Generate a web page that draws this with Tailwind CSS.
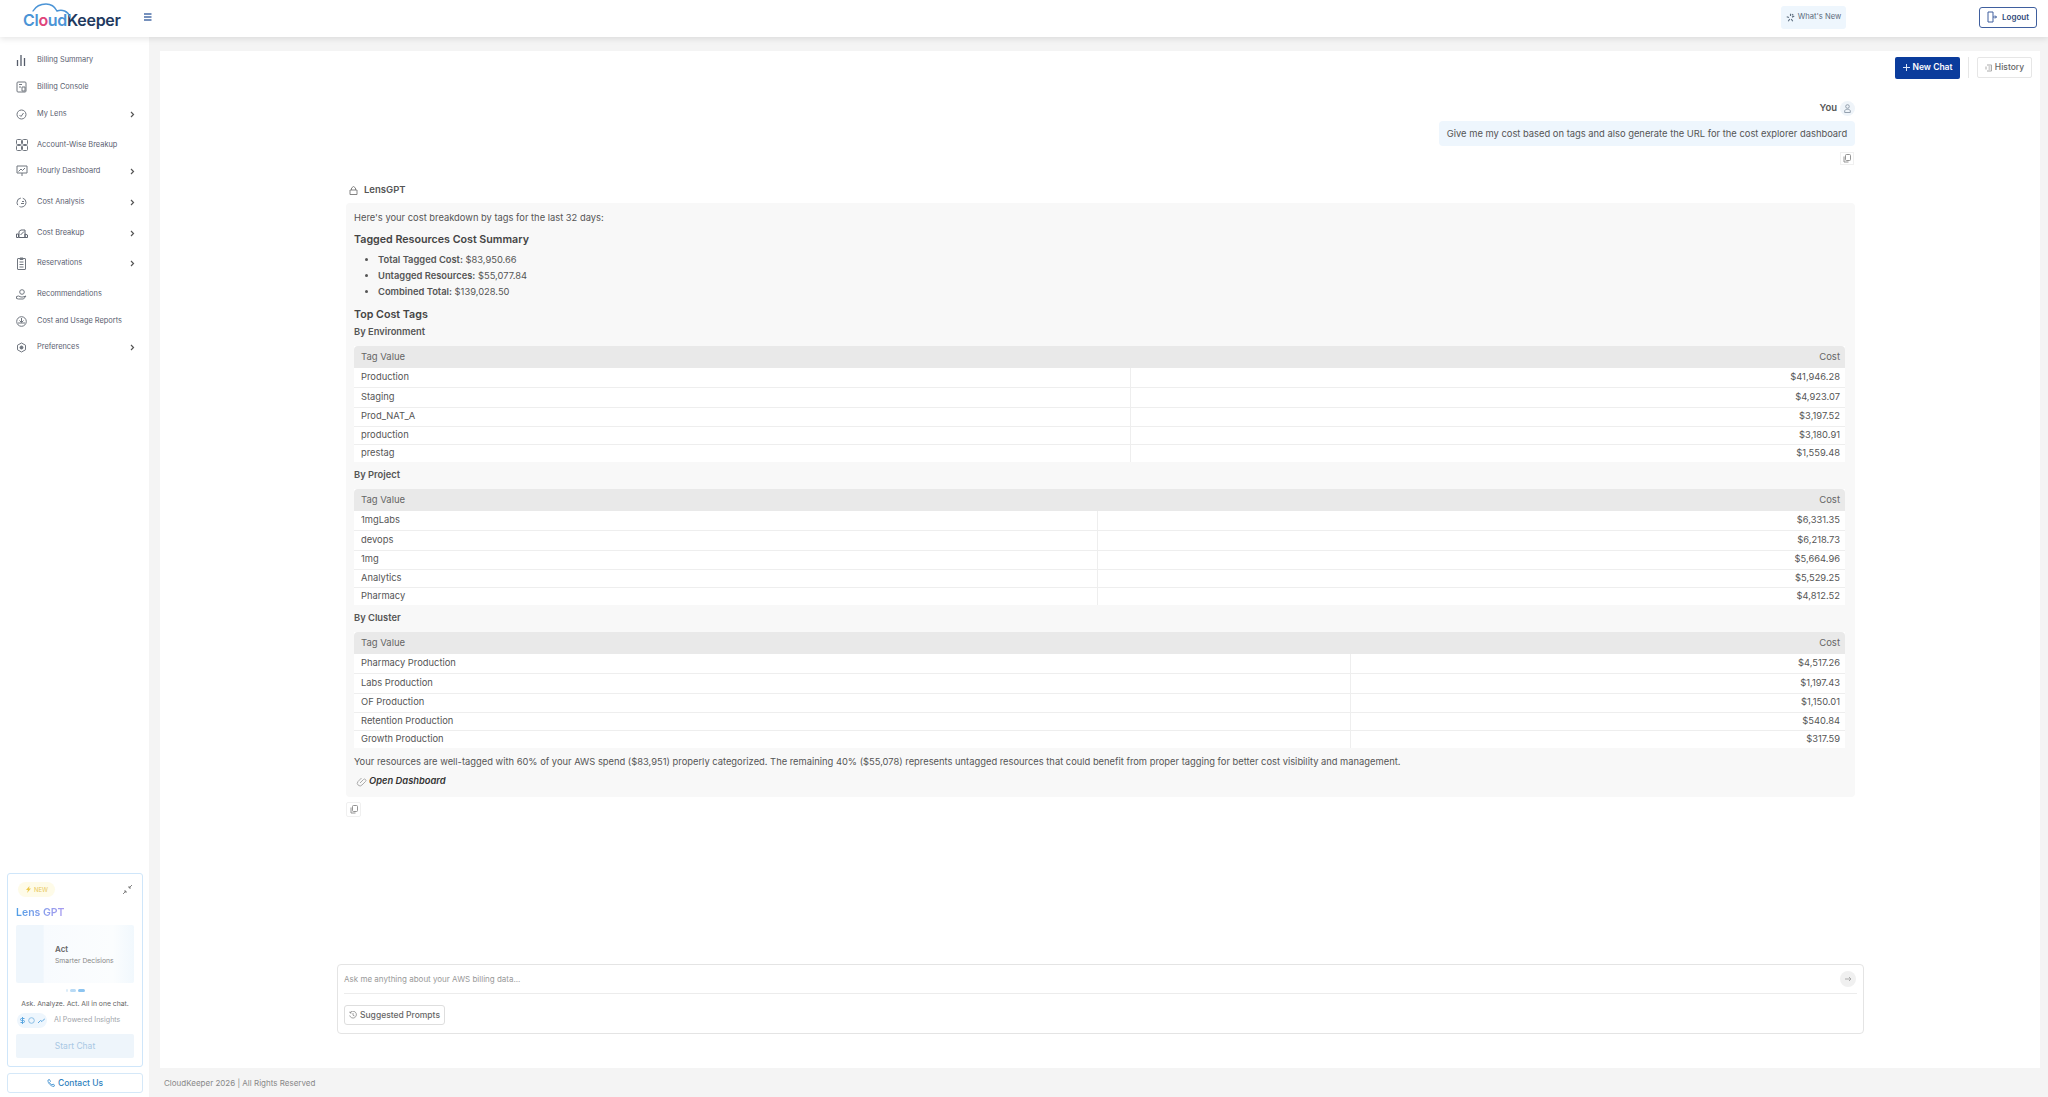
<!doctype html>
<html lang="en">
<head>
<meta charset="UTF-8">
<script src="https://cdn.jsdelivr.net/npm/@tailwindcss/browser@4"></script>
<title>CloudKeeper Lens</title>
</head>
<body class="h-screen overflow-hidden flex flex-col bg-[#f4f4f4] text-[#444] font-[Inter,sans-serif]">

<!-- top bar -->
<header class="h-[37px] shrink-0 bg-white shadow-[0_2px_6px_rgba(0,0,0,0.1)] relative z-10 flex items-center pl-[23px] pr-[11px]">
  <div class="relative w-[97px] h-[37px] flex items-center pt-[3px] text-[16px] leading-none font-semibold tracking-[-0.3px] text-[#1f3a5f]">
    <svg class="absolute left-0 top-[3px]" width="50" height="18" viewBox="0 0 50 18" fill="none" stroke="#4b94d6" stroke-width="1.400" stroke-linecap="round"><path d="M10 8C13 3 18 1 23 1c5 0 9 3 11 7 5-2 11 0 13 6"/></svg>
    <span class="text-[#4b94d6]">Cl</span><span class="text-[#e0457b]">o</span><span class="text-[#4b94d6]">ud</span><span>Keeper</span>
  </div>
  <svg class="ml-[23px] mb-[4px]" width="9" height="8" viewBox="0 0 9 8" fill="none" stroke="#4a6ea8" stroke-width="1.300"><path d="M1 1h7.500M1 4h7.500M1 7h7.500"/></svg>
  <div class="ml-auto flex items-center mb-[3px]">
    <div class="w-[65px] h-[23px] rounded-[3px] bg-[#eef6fd] flex items-center justify-center gap-[3px] text-[7.600px] text-[#5b6b7c]">
      <svg width="9" height="9" viewBox="0 0 12 12" fill="none" stroke="#5b6b7c" stroke-width="1.500"><path d="M6 1v3M11 4 8 5.500M9 11 7 8M3 11l2-3M1 5l3 1M9.500 1.500 8 3"/></svg>
      What's New
    </div>
    <div class="ml-[133px] w-[58px] h-[21px] rounded-[3px] border border-[#3f5f9e] flex items-center justify-center gap-[5px] text-[8px] font-semibold text-[#2f4a7a]">
      <svg width="10" height="12" viewBox="0 0 10 12" fill="none" stroke="#3f5f9e" stroke-width="1"><path d="M6 1H1v10h5zM6 6h3.500M8 4.500 9.500 6 8 7.500"/></svg>
      Logout
    </div>
  </div>
</header>

<div class="flex-1 flex min-h-0">
  <!-- sidebar -->
  <aside class="w-[149px] shrink-0 bg-white flex flex-col pt-[10px] pb-[4px] text-[7.400px] text-[#5a6070]">
    <nav>
      <a class="h-[26px] mb-[1px] flex items-center pl-[16px]">
        <svg class="w-[10px] h-[12px] mr-[11px]" viewBox="0 0 10 12" fill="none" stroke="#555c6a" stroke-width="1.300"><path d="M1.500 12V6M5 12V1M8.500 12V4"/></svg>
        Billing Summary
      </a>
      <a class="h-[26px] mb-[1px] flex items-center pl-[16px]">
        <svg class="w-[11px] h-[12px] mr-[10px]" viewBox="0 0 11 12" fill="none" stroke="#70767f" stroke-width="1"><rect x="1" y="1" width="9" height="10" rx="1"/><path d="M3 3.500h3M3 6h2M6 6h3v4H6z"/></svg>
        Billing Console
      </a>
      <a class="h-[26px] mb-[5px] flex items-center pl-[16px]">
        <svg class="w-[11px] h-[11px] mr-[10px]" viewBox="0 0 11 11" fill="none" stroke="#70767f" stroke-width="1"><circle cx="5.500" cy="5.500" r="4.500"/><path d="M3.500 6 5 7.500 7.500 4"/></svg>
        My Lens
        <svg class="ml-auto mr-[14px] mt-[1px]" width="5" height="7" viewBox="0 0 5 7" fill="none" stroke="#555" stroke-width="1.200"><path d="M1 1l2.500 2.500L1 6"/></svg>
      </a>
      <a class="h-[26px] flex items-center pl-[16px]">
        <svg class="w-[12px] h-[12px] mr-[9px]" viewBox="0 0 12 12" fill="none" stroke="#70767f" stroke-width="1"><rect x="0.500" y="0.500" width="5" height="5" rx="1"/><rect x="6.500" y="0.500" width="5" height="5" rx="1"/><rect x="0.500" y="6.500" width="5" height="5" rx="1"/><rect x="6.500" y="6.500" width="5" height="5" rx="1"/></svg>
        Account-Wise Breakup
      </a>
      <a class="h-[26px] mb-[5px] flex items-center pl-[16px]">
        <svg class="w-[12px] h-[12px] mr-[9px]" viewBox="0 0 12 12" fill="none" stroke="#70767f" stroke-width="1"><path d="M1 1h10v7H1zM6 8v3M2.500 6.500 5 4l1.500 1.500L9 3"/></svg>
        Hourly Dashboard
        <svg class="ml-auto mr-[14px] mt-[1px]" width="5" height="7" viewBox="0 0 5 7" fill="none" stroke="#555" stroke-width="1.200"><path d="M1 1l2.500 2.500L1 6"/></svg>
      </a>
      <a class="h-[26px] mb-[5px] flex items-center pl-[16px]">
        <svg class="w-[11px] h-[11px] mr-[10px]" viewBox="0 0 11 11" fill="none" stroke="#70767f" stroke-width="1"><circle cx="5.500" cy="5.500" r="4.500" stroke-dasharray="9 2"/><path d="M6 4.500h2M5 6.500h3"/></svg>
        Cost Analysis
        <svg class="ml-auto mr-[14px] mt-[1px]" width="5" height="7" viewBox="0 0 5 7" fill="none" stroke="#555" stroke-width="1.200"><path d="M1 1l2.500 2.500L1 6"/></svg>
      </a>
      <a class="h-[26px] mb-[4px] flex items-center pl-[16px]">
        <svg class="w-[12px] h-[9px] mr-[9px]" viewBox="0 0 12 9" fill="none" stroke="#5f6570" stroke-width="1"><path d="M.5 8.500V5h2v3.500zM3 8.500V2.500L5 1h4v7.500zM9 8.500V5l2.500 1v2.500zM4.500 6 8 2.500"/></svg>
        Cost Breakup
        <svg class="ml-auto mr-[14px] mt-[1px]" width="5" height="7" viewBox="0 0 5 7" fill="none" stroke="#555" stroke-width="1.200"><path d="M1 1l2.500 2.500L1 6"/></svg>
      </a>
      <a class="h-[26px] mb-[5px] flex items-center pl-[16px]">
        <svg class="w-[11px] h-[13px] mr-[10px]" viewBox="0 0 11 13" fill="none" stroke="#70767f" stroke-width="1"><rect x="1.500" y="1.500" width="8" height="11" rx="0.500"/><path d="M4 1h3v1.500H4zM3.500 5h4M3.500 7.500h4M3.500 10h4"/></svg>
        Reservations
        <svg class="ml-auto mr-[14px] mt-[1px]" width="5" height="7" viewBox="0 0 5 7" fill="none" stroke="#555" stroke-width="1.200"><path d="M1 1l2.500 2.500L1 6"/></svg>
      </a>
      <a class="h-[26px] mb-[1px] flex items-center pl-[16px]">
        <svg class="w-[11px] h-[11px] mr-[10px]" viewBox="0 0 11 11" fill="none" stroke="#70767f" stroke-width="1"><circle cx="6" cy="3" r="2.300"/><path d="M.5 7.500l2-.5 2.500 1h2l3-1-2.500 3H2.500L.5 9.500z"/></svg>
        Recommendations
      </a>
      <a class="h-[26px] flex items-center pl-[16px]">
        <svg class="w-[11px] h-[11px] mr-[10px]" viewBox="0 0 11 11" fill="none" stroke="#70767f" stroke-width="1"><circle cx="5.500" cy="5.500" r="4.800"/><path d="M5.500 2v4M3.500 4.500l2 2 2-2M2 7h7"/></svg>
        Cost and Usage Reports
      </a>
      <a class="h-[26px] flex items-center pl-[16px]">
        <svg class="w-[11px] h-[11px] mr-[10px]" viewBox="0 0 11 11" fill="none" stroke="#70767f" stroke-width="1"><path d="M5.500 1 9.500 3.200v4.600L5.500 10l-4-2.200V3.200z"/><circle cx="5.500" cy="5.500" r="1.500" fill="#70767f"/></svg>
        Preferences
        <svg class="ml-auto mr-[14px] mt-[1px]" width="5" height="7" viewBox="0 0 5 7" fill="none" stroke="#555" stroke-width="1.200"><path d="M1 1l2.500 2.500L1 6"/></svg>
      </a>
    </nav>

    <div class="mt-auto ml-[7px] mr-[6px] h-[194px] rounded-[3px] border border-[#cfe6fa] pt-[8px] px-[8px] flex flex-col">
      <div class="flex items-center justify-between">
        <span class="w-[37px] h-[15px] ml-[2px] rounded-full bg-[#fefbe8] flex items-center justify-center gap-[2px] text-[6px] text-[#e8c75c]">
          <svg width="7" height="7" viewBox="0 0 7 7" fill="#ecc94b"><path d="M4.500 0 1 4h2l-1 3 4-4.500H4z"/></svg>NEW
        </span>
        <svg class="mr-[1px]" width="11" height="11" viewBox="0 0 11 11" fill="none" stroke="#777" stroke-width="0.900"><path d="M10 1 7 4M7 2v2h2M1 10l3-3M2 7h2v2"/></svg>
      </div>
      <div class="mt-[8px] text-[10.500px] leading-[15px] font-semibold text-transparent bg-clip-text bg-gradient-to-r from-[#4f9fe6] to-[#a99bf0] w-fit">Lens GPT</div>
      <div class="mt-[5px] h-[58px] rounded-[2px] bg-[linear-gradient(90deg,#eff6fc_0,#eff6fc_23%,#f8fbfe_24%,#fbfdfe_82%,#f1f8fd_100%)] pl-[39px] pt-[18px]">
        <div class="text-[8px] leading-[12px] font-semibold text-[#666]">Act</div>
        <div class="text-[6.800px] leading-[10px] mt-[1px] text-[#888]">Smarter Decisions</div>
      </div>
      <div class="mt-[6px] flex justify-center gap-[2px]">
        <span class="w-[2px] h-[3px] rounded-full bg-[#dcecf8]"></span>
        <span class="w-[6px] h-[3px] rounded-full bg-[#b8daf5]"></span>
        <span class="w-[7px] h-[3px] rounded-full bg-[#8cc4f0]"></span>
      </div>
      <div class="mt-[7px] text-center text-[6.800px] leading-[10px] whitespace-nowrap text-[#666]">Ask. Analyze. Act. All in one chat.</div>
      <div class="mt-[4px] flex items-center">
        <span class="w-[30px] h-[15px] ml-[1px] rounded-full bg-[#eef6fd] flex items-center justify-center gap-[3px]">
          <svg width="5" height="7" viewBox="0 0 5 7" fill="none" stroke="#5aa6e0"><path d="M4.500 1.500H1.500a1 1 0 0 0 0 2h2a1 1 0 0 1 0 2H.5M2.500 0v7"/></svg>
          <svg width="7" height="7" viewBox="0 0 7 7" fill="none" stroke="#8bbfe6"><circle cx="3.500" cy="3.500" r="2.800"/></svg>
          <svg width="7" height="7" viewBox="0 0 7 7" fill="none" stroke="#5aa6e0"><path d="M0 6 2.500 3.500l1.500 1L7 1.500"/></svg>
        </span>
        <span class="ml-[7px] text-[7.100px] text-[#a0a4aa]">AI Powered Insights</span>
      </div>
      <div class="mt-[6px] h-[24px] rounded-[2px] bg-[#eef5fb] flex items-center justify-center text-[8.500px] text-[#a9c8e4]">Start Chat</div>
    </div>
    <div class="mt-[6px] ml-[7px] mr-[6px] h-[20px] shrink-0 rounded-[3px] border border-[#d5e8f8] flex items-center justify-center gap-[3px] text-[8.500px] font-medium text-[#2f7fbe]">
      <svg width="8" height="8" viewBox="0 0 8 8" fill="none" stroke="#5a9fd6"><path d="M1 1l1.500-.5L3.500 2.500 2.500 3.500C3 4.800 3.800 5.500 5 6l1-1 1.500 1L7 7.500C4 7.500.5 4 1 1z"/></svg>
      Contact Us
    </div>
  </aside>

  <!-- main area -->
  <div class="flex-1 min-w-0 flex flex-col pl-[11px] pr-[8px] pt-[14px]">
    <main class="flex-1 min-h-0 bg-white relative flex flex-col">
      <div class="h-[27px] mt-[3px] flex items-center justify-end pr-[8px]">
        <div class="w-[65px] h-[22px] rounded-[2px] bg-[#0b3c9c] flex items-center justify-center gap-[3px] text-[8.500px] font-semibold text-white">
          <svg width="7" height="7" viewBox="0 0 7 7" stroke="#dce6f8" stroke-width="1"><path d="M3.500 0v7M0 3.500h7"/></svg>
          New Chat
        </div>
        <div class="mx-[8px] w-px h-[21px] bg-[#e6e6e6]"></div>
        <div class="w-[55px] h-[21px] rounded-[2px] border border-[#e6e6e6] flex items-center justify-center gap-[2px] text-[8.500px] font-medium text-[#666]">
          <svg width="8" height="8" viewBox="0 0 8 8" fill="none" stroke="#aaa"><path d="M2 1h4.500v6H2M1 2.500v3M3.500 3h2M3.500 5h2"/></svg>
          History
        </div>
      </div>

      <!-- user message -->
      <div class="mt-[20px] pr-[185px] flex items-center justify-end gap-[3px] h-[15px] text-[9.500px] font-semibold text-[#555]">
        You
        <span class="w-[15px] h-[15px] rounded-full bg-[#eff4f9] flex items-center justify-center">
          <svg width="7" height="9" viewBox="0 0 7 9" fill="none" stroke="#8a97a6" stroke-width="0.900"><circle cx="3.500" cy="2.500" r="1.800"/><path d="M.7 8.500V7c0-1 1-1.700 2.800-1.700S6.300 6 6.300 7v1.500z"/></svg>
        </span>
      </div>
      <div class="mr-[185px] mt-[5px] pt-[1px] self-end h-[25px] w-[416px] rounded-[4px] bg-[#eef6fd] flex items-center justify-center text-[9.370px] text-[#555] whitespace-nowrap">Give me my cost based on tags and also generate the URL for the cost explorer dashboard</div>
      <div class="mr-[186px] mt-[6px] self-end w-[14px] h-[13px] border border-[#f0f0f0] flex items-center justify-center">
        <svg width="8" height="9" viewBox="0 0 8 9" fill="none" stroke="#888" stroke-width="0.900"><rect x="2.500" y="0.500" width="5" height="6" rx="1"/><path d="M1 2.500v5.500h4.500"/></svg>
      </div>

      <!-- assistant message -->
      <div class="ml-[186px] mr-[185px] mt-[19px]">
        <div class="h-[13px] flex items-center gap-[6px] text-[9.500px] font-semibold text-[#555]">
          <svg class="ml-[3px]" width="9" height="9" viewBox="0 0 9 9" fill="none" stroke="#777" stroke-width="0.900"><path d="M1 4h7v4.500H1zM2.500 4V2l2-1.500L6.500 2v2"/></svg>
          LensGPT
        </div>
        <div class="mt-[6px] h-[594px] rounded-[4px] bg-[#f8f8f8] pl-[8px] pr-[9px] pt-[8px] text-[9.350px] text-[#555]">
          <p class="leading-[14px]">Here's your cost breakdown by tags for the last 32 days:</p>
          <h3 class="mt-[7px] text-[10.700px] leading-[15px] font-semibold text-[#444]">Tagged Resources Cost Summary</h3>
          <ul class="mt-[5px] ml-[24px] list-disc">
            <li class="h-[16px] leading-[16px]"><b class="font-semibold">Total Tagged Cost:</b> $83,950.66</li>
            <li class="h-[16px] leading-[16px]"><b class="font-semibold">Untagged Resources:</b> $55,077.84</li>
            <li class="h-[16px] leading-[16px]"><b class="font-semibold">Combined Total:</b> $139,028.50</li>
          </ul>
          <h3 class="mt-[7px] text-[10.700px] leading-[15px] font-semibold text-[#444]">Top Cost Tags</h3>
          <h4 class="mt-[3px] h-[14px] leading-[14px] font-semibold">By Environment</h4>

          <table class="mt-[7px] w-[1491px] table-fixed border-collapse bg-white">
            <thead>
              <tr class="h-[22px] bg-[#e9e9e9] text-[9.500px] text-[#666]">
                <th class="w-[776px] pl-[7px] font-normal text-left rounded-tl-[4px]">Tag Value</th>
                <th class="pr-[5px] font-normal text-right rounded-tr-[4px]">Cost</th>
              </tr>
            </thead>
            <tbody>
              <tr class="h-[19px] border-b border-[#eee]"><td class="pl-[7px] border-r border-[#eee]">Production</td><td class="pr-[5px] text-right">$41,946.28</td></tr>
              <tr class="h-[20px] border-b border-[#eee]"><td class="pl-[7px] border-r border-[#eee]">Staging</td><td class="pr-[5px] text-right">$4,923.07</td></tr>
              <tr class="h-[19px] border-b border-[#eee]"><td class="pl-[7px] border-r border-[#eee]">Prod_NAT_A</td><td class="pr-[5px] text-right">$3,197.52</td></tr>
              <tr class="h-[18px] border-b border-[#eee]"><td class="pl-[7px] border-r border-[#eee]">production</td><td class="pr-[5px] text-right">$3,180.91</td></tr>
              <tr class="h-[18px]"><td class="pl-[7px] border-r border-[#eee]">prestag</td><td class="pr-[5px] text-right">$1,559.48</td></tr>
            </tbody>
          </table>

          <h4 class="mt-[6px] h-[14px] leading-[14px] font-semibold">By Project</h4>
          <table class="mt-[7px] w-[1491px] table-fixed border-collapse bg-white">
            <thead>
              <tr class="h-[22px] bg-[#e9e9e9] text-[9.500px] text-[#666]">
                <th class="w-[743px] pl-[7px] font-normal text-left rounded-tl-[4px]">Tag Value</th>
                <th class="pr-[5px] font-normal text-right rounded-tr-[4px]">Cost</th>
              </tr>
            </thead>
            <tbody>
              <tr class="h-[19px] border-b border-[#eee]"><td class="pl-[7px] border-r border-[#eee]">1mgLabs</td><td class="pr-[5px] text-right">$6,331.35</td></tr>
              <tr class="h-[20px] border-b border-[#eee]"><td class="pl-[7px] border-r border-[#eee]">devops</td><td class="pr-[5px] text-right">$6,218.73</td></tr>
              <tr class="h-[19px] border-b border-[#eee]"><td class="pl-[7px] border-r border-[#eee]">1mg</td><td class="pr-[5px] text-right">$5,664.96</td></tr>
              <tr class="h-[18px] border-b border-[#eee]"><td class="pl-[7px] border-r border-[#eee]">Analytics</td><td class="pr-[5px] text-right">$5,529.25</td></tr>
              <tr class="h-[18px]"><td class="pl-[7px] border-r border-[#eee]">Pharmacy</td><td class="pr-[5px] text-right">$4,812.52</td></tr>
            </tbody>
          </table>

          <h4 class="mt-[6px] h-[14px] leading-[14px] font-semibold">By Cluster</h4>
          <table class="mt-[7px] w-[1491px] table-fixed border-collapse bg-white">
            <thead>
              <tr class="h-[22px] bg-[#e9e9e9] text-[9.500px] text-[#666]">
                <th class="w-[996px] pl-[7px] font-normal text-left rounded-tl-[4px]">Tag Value</th>
                <th class="pr-[5px] font-normal text-right rounded-tr-[4px]">Cost</th>
              </tr>
            </thead>
            <tbody>
              <tr class="h-[19px] border-b border-[#eee]"><td class="pl-[7px] border-r border-[#eee]">Pharmacy Production</td><td class="pr-[5px] text-right">$4,517.26</td></tr>
              <tr class="h-[20px] border-b border-[#eee]"><td class="pl-[7px] border-r border-[#eee]">Labs Production</td><td class="pr-[5px] text-right">$1,197.43</td></tr>
              <tr class="h-[19px] border-b border-[#eee]"><td class="pl-[7px] border-r border-[#eee]">OF Production</td><td class="pr-[5px] text-right">$1,150.01</td></tr>
              <tr class="h-[18px] border-b border-[#eee]"><td class="pl-[7px] border-r border-[#eee]">Retention Production</td><td class="pr-[5px] text-right">$540.84</td></tr>
              <tr class="h-[18px]"><td class="pl-[7px] border-r border-[#eee]">Growth Production</td><td class="pr-[5px] text-right">$317.59</td></tr>
            </tbody>
          </table>

          <p class="mt-[7px] leading-[14px]">Your resources are well-tagged with 60% of your AWS spend ($83,951) properly categorized. The remaining 40% ($55,078) represents untagged resources that could benefit from proper tagging for better cost visibility and management.</p>
          <p class="mt-[5px] h-[14px] flex items-center gap-[2px] font-semibold italic text-[#333]">
            <svg class="ml-[2px]" width="11" height="11" viewBox="0 0 11 11" fill="none" stroke="#aaa"><path d="M4 7 7.500 3.500a1.300 1.300 0 0 1 2 2L6 9a2.500 2.500 0 0 1-4-3.500L5.500 2"/></svg>
            Open Dashboard
          </p>
        </div>
        <div class="mt-[5px] w-[15px] h-[15px] border border-[#f0f0f0] rounded-[2px] flex items-center justify-center">
          <svg width="8" height="9" viewBox="0 0 8 9" fill="none" stroke="#888" stroke-width="0.900"><rect x="2.500" y="0.500" width="5" height="6" rx="1"/><path d="M1 2.500v5.500h4.500"/></svg>
        </div>
      </div>

      <!-- chat input -->
      <div class="absolute left-[177px] right-[176px] bottom-[34px] h-[70px] rounded-[4px] border border-[#e4e4e4] px-[6px]">
        <div class="h-[29px] border-b border-[#ececec] flex items-center justify-between text-[8px] text-[#999]">
          Ask me anything about your AWS billing data...
          <span class="w-[16px] h-[16px] mr-[1px] rounded-full bg-[#f0f0f0] flex items-center justify-center">
            <svg width="7" height="6" viewBox="0 0 7 6" fill="none" stroke="#aaa"><path d="M0 3h6M4 1l2 2-2 2"/></svg>
          </span>
        </div>
        <div class="mt-[11px] w-[101px] h-[20px] rounded-[3px] border border-[#dedede] flex items-center justify-center gap-[3px] text-[8.500px] font-medium text-[#666]">
          <svg width="8" height="8" viewBox="0 0 8 8" fill="none" stroke="#888" stroke-width="0.800"><path d="M1 2A3.400 3.400 0 1 1 .7 4.500M1 .5V2h1.500M4 2v2.200l1.500.8"/></svg>
          Suggested Prompts
        </div>
      </div>
    </main>
    <footer class="h-[29px] shrink-0 flex items-center pl-[4px] text-[8px] text-[#888]">CloudKeeper 2026 | All Rights Reserved</footer>
  </div>
</div>
</body>
</html>
